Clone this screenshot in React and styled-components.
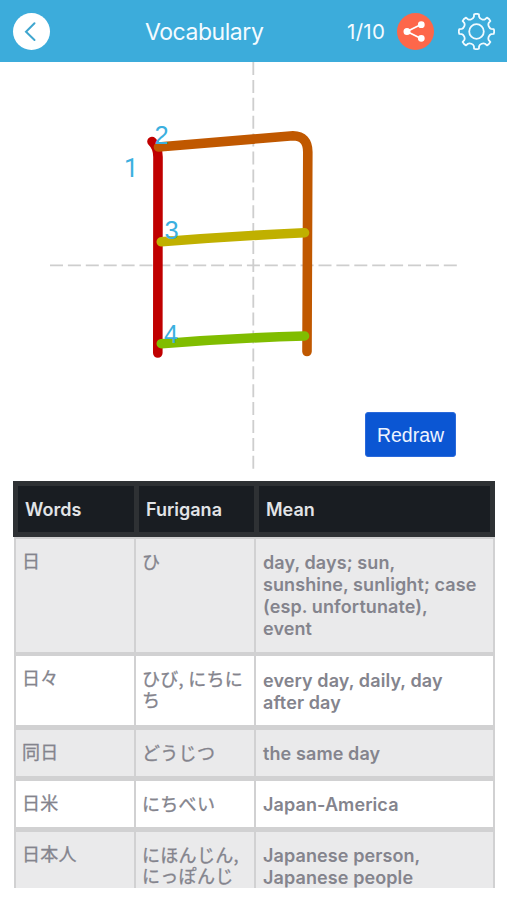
import React, { useState } from 'react';
import styled, { createGlobalStyle } from 'styled-components';

const GlobalStyle = createGlobalStyle`
  body {
    margin: 0;
    background: #fff;
  }

  * {
    box-sizing: border-box;
  }
`;

const Screen = styled.div`
  display: flex;
  flex-direction: column;
  width: 507px;
  height: 900px;
  overflow: hidden;
  background: #fff;
  font-family: Inter, 'Noto Sans CJK JP', sans-serif;
`;

const Header = styled.header`
  display: grid;
  grid-template-columns: 37px 297px 50px 37px 61px;
  align-items: center;
  flex: none;
  height: 62px;
  padding: 0 12px 0 13px;
  background: #3cacdb;
  color: #f4fbff;
`;

const RoundButton = styled.button`
  display: flex;
  align-items: center;
  justify-content: center;
  width: 37px;
  height: 37px;
  padding: 0;
  border: none;
  border-radius: 50%;
  background: ${(props) => props.$color || 'transparent'};
  cursor: pointer;
`;

const Title = styled.h1`
  margin: 0;
  padding: 1px 0 0 95px;
  font-size: 23px;
  font-weight: 400;
  letter-spacing: -0.45px;
`;

const Counter = styled.span`
  padding-top: 1px;
  font-size: 20.5px;
  letter-spacing: 0.3px;
  white-space: nowrap;
`;

const Actions = styled.div`
  display: contents;

  ${RoundButton} {
    justify-self: end;
  }
`;

const DrawArea = styled.section`
  position: relative;
  flex: none;
  height: 419px;

  svg {
    display: block;
  }
`;

const StrokeNumber = styled.text`
  fill: #3cb0df;
  font-family: ${(props) => props.$font || "'Liberation Sans'"}, sans-serif;
  font-size: 25.5px;
`;

const RedrawButton = styled.button`
  position: absolute;
  right: 51px;
  bottom: 24px;
  width: 91px;
  height: 45px;
  padding: 1px 0 0;
  border: 1px solid #2a69da;
  border-radius: 3px;
  background: #0b56d3;
  color: #eef4ff;
  font-family: 'Liberation Sans', sans-serif;
  font-size: 19.5px;
  cursor: pointer;
`;

const Table = styled.div`
  flex: none;
  width: 482px;
  height: 407px;
  margin-left: 13px;
  overflow: hidden;
`;

const HeadRow = styled.div`
  display: grid;
  grid-template-columns: 116px 115px 1fr;
  gap: 5px;
  height: 56px;
  padding: 5px;
  background: #2e3134;
`;

const HeadCell = styled.div`
  display: flex;
  align-items: center;
  padding-left: 7px;
  background: #191d22;
  color: #e2e4e7;
  font-size: 18px;
  font-weight: 600;
`;

const Body = styled.div`
  margin-left: 1px;
  padding-top: 2px;
  background: #d1d1d2;
`;

const Row = styled.div`
  display: grid;
  grid-template-columns: 118px 118px 1fr;
  gap: 2px;
  margin-bottom: 4.7px;
  padding: 0 2px;
`;

const Cell = styled.div`
  padding: 13.3px 12px 11.3px 7px;
  background: ${(props) => (props.$shaded ? '#eaeaeb' : '#fff')};
  color: #84848d;
  font-size: 18px;
  font-weight: 600;
  line-height: 22px;
  letter-spacing: 0.1px;
`;

const KanaCell = styled(Cell)`
  padding: ${(props) => (props.$raised ? '11px 5px 10px 6px' : '12px 5px 6px 6px')};
  font-family: 'Noto Sans CJK JP', sans-serif;
  font-size: 18px;
  font-weight: 400;
  line-height: 21px;
  letter-spacing: 0.3px;
  -webkit-text-stroke: 0.3px #84848d;
`;

const STROKES = [
  { color: '#c00000', d: 'M152 79.5 Q158 85 158 95 L157.8 291', x: 124, y: 115, font: 'Roboto' },
  { color: '#c05800', d: 'M158.5 85 L293 73.8 Q307.8 74 307.8 90 L307 289.5', x: 154.5, y: 81.5 },
  { color: '#c0b000', d: 'M161.3 179.8 Q232 174 304.5 170.8', x: 164.5, y: 176.5 },
  { color: '#80bd00', d: 'M161.3 281.7 Q232 276 304.5 274', x: 164, y: 280.5 },
];

const WORDS = [
  { word: '日', kana: 'ひ', mean: 'day, days; sun, sunshine, sunlight; case (esp. unfortunate), event' },
  { word: '日々', kana: 'ひび, にちにち', mean: 'every day, daily, day after day' },
  { word: '同日', kana: 'どうじつ', mean: 'the same day' },
  { word: '日米', kana: 'にちべい', mean: 'Japan-America' },
  { word: '日本人', kana: 'にほんじん, にっぽんじん', mean: 'Japanese person, Japanese people' },
];

const BackIcon = () => (
  <svg width="37" height="37" fill="none" stroke="#3fa6cf" strokeWidth="2" strokeLinecap="round">
    <path d="M21.5 10.3 L13 18.8 L21.5 27" />
  </svg>
);

const ShareIcon = () => (
  <svg width="37" height="37" fill="#fff" stroke="#fff" strokeWidth="1.8">
    <path d="M24 11.5 L10 18.5 L24 25.5" fill="none" />
    <circle cx="10" cy="18.5" r="2.6" />
    <circle cx="24.3" cy="11.7" r="2.5" />
    <circle cx="24.3" cy="25.3" r="2.5" />
  </svg>
);

// Eight rounded teeth, each one joined to the next by a shallow notch
const toothPath = () => {
  const at = (deg, r) => {
    const a = (deg * Math.PI) / 180;
    return `${(18.5 + r * Math.cos(a)).toFixed(2)} ${(18.5 + r * Math.sin(a)).toFixed(2)}`;
  };
  let d = `M${at(-8, 17.4)}`;
  for (let i = 0; i < 8; i += 1) {
    const c = i * 45;
    d += ` Q${at(c, 18.1)} ${at(c + 8, 17.4)}`;
    d += ` L${at(c + 10, 14.9)}`;
    d += ` C${at(c + 14, 13)} ${at(c + 31, 13)} ${at(c + 35, 14.9)}`;
    d += ` L${at(c + 37, 17.4)}`;
  }
  return `${d} Z`;
};

const GearIcon = () => (
  <svg width="37" height="37" fill="none" stroke="#f0faff" strokeWidth="1.8" strokeLinejoin="round">
    <path d={toothPath()} />
    <circle cx="18.5" cy="18.5" r="7.3" />
  </svg>
);

const StrokeDiagram = () => (
  <svg width="507" height="408">
    <g stroke="#cecece" strokeWidth="1.8" strokeDasharray="13 4.9">
      <line x1="253.3" y1="0" x2="253.3" y2="407" />
      <line x1="50" y1="203.4" x2="457" y2="203.4" />
    </g>
    {STROKES.map((stroke) => (
      <path
        key={stroke.color}
        d={stroke.d}
        fill="none"
        stroke={stroke.color}
        strokeWidth="9.6"
        strokeLinecap="round"
      />
    ))}
    {STROKES.map((stroke, index) => (
      <StrokeNumber key={stroke.color} x={stroke.x} y={stroke.y} $font={stroke.font}>
        {index + 1}
      </StrokeNumber>
    ))}
  </svg>
);

const App = () => {
  const [drawCount, setDrawCount] = useState(0);

  return (
    <Screen>
      <GlobalStyle />
      <Header>
        <RoundButton $color="#fff" aria-label="Back">
          <BackIcon />
        </RoundButton>
        <Title>Vocabulary</Title>
        <Counter>1/10</Counter>
        <Actions>
          <RoundButton $color="#fd674a" aria-label="Share">
            <ShareIcon />
          </RoundButton>
          <RoundButton aria-label="Settings">
            <GearIcon />
          </RoundButton>
        </Actions>
      </Header>

      <DrawArea>
        <StrokeDiagram key={drawCount} />
        <RedrawButton onClick={() => setDrawCount(drawCount + 1)}>Redraw</RedrawButton>
      </DrawArea>

      <Table>
        <HeadRow>
          <HeadCell>Words</HeadCell>
          <HeadCell>Furigana</HeadCell>
          <HeadCell>Mean</HeadCell>
        </HeadRow>
        <Body>
          {WORDS.map((item, index) => (
            <Row key={item.word}>
              <KanaCell $raised $shaded={index % 2 === 0}>{item.word}</KanaCell>
              <KanaCell $shaded={index % 2 === 0}>{item.kana}</KanaCell>
              <Cell $shaded={index % 2 === 0}>{item.mean}</Cell>
            </Row>
          ))}
        </Body>
      </Table>
    </Screen>
  );
};

export default App;
